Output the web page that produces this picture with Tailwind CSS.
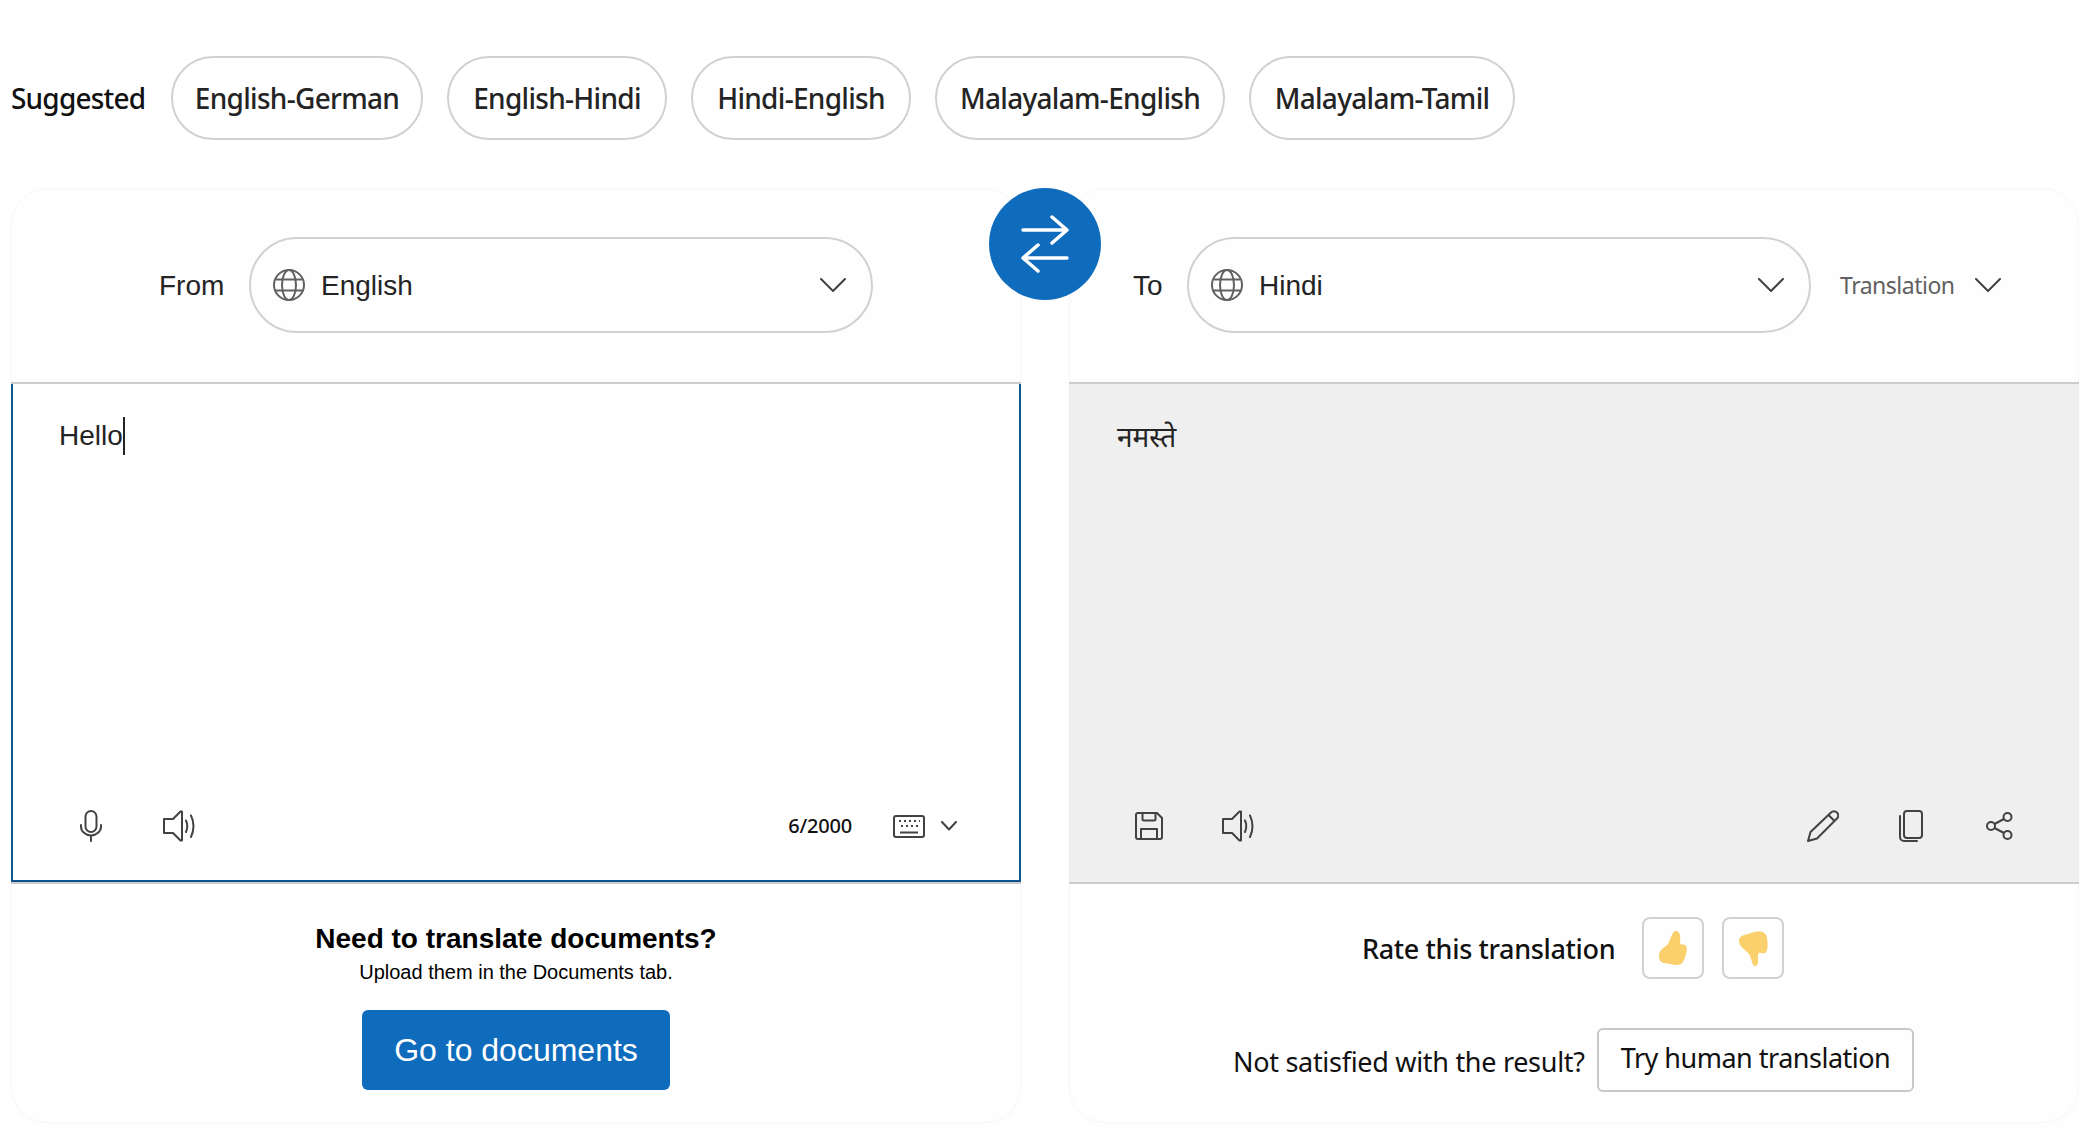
<!DOCTYPE html>
<html lang="en">
<head>
<meta charset="UTF-8" />
<meta name="viewport" content="width=device-width, initial-scale=1" />
<title>Translator</title>
<script src="https://cdn.jsdelivr.net/npm/@tailwindcss/browser@4"></script>
</head>
<body class="relative bg-white h-[1142px] overflow-hidden font-['Liberation_Sans',sans-serif] text-[#242424]">

  <!-- SUGGESTED -->
  <div class="flex items-center pt-[56px] pl-[11px] h-[188px] pb-[48px] font-['Noto_Sans',sans-serif]">
    <span class="w-[160px] text-[28px] font-medium text-[#111] tracking-[-0.8px]">Suggested</span>
    <div class="flex gap-6 text-[28px] font-medium tracking-[-0.7px]">
      <button class="w-[252px] h-[84px] rounded-[42px] border-2 border-[#d1d1d1]">English-German</button>
      <button class="w-[220px] h-[84px] rounded-[42px] border-2 border-[#d1d1d1]">English-Hindi</button>
      <button class="w-[220px] h-[84px] rounded-[42px] border-2 border-[#d1d1d1]">Hindi-English</button>
      <button class="w-[290px] h-[84px] rounded-[42px] border-2 border-[#d1d1d1]">Malayalam-English</button>
      <button class="w-[266px] h-[84px] rounded-[42px] border-2 border-[#d1d1d1]">Malayalam-Tamil</button>
    </div>
  </div>

  <!-- SWAP BUTTON -->
  <button class="absolute z-10 left-[989px] top-[188px] w-[112px] h-[112px] rounded-full bg-[#0f6cbd]">
    <svg width="112" height="112" viewBox="0 0 112 112" fill="none" stroke="#fff" stroke-width="3.5" stroke-linecap="round" stroke-linejoin="round"><path d="M34 42H78M63 29L78 42L63 55M34 70H78M49 57L34 70L49 83"/></svg>
  </button>

  <main class="grid grid-cols-[1010px_1010px] gap-x-[48px] pl-[11px]">

    <!-- SOURCE CARD -->
    <section class="h-[935px] rounded-[36px] bg-[#fefefe] border border-[#f7f7f7] shadow-[0_6px_8px_rgba(0,0,0,0.012)]">
      <div class="h-[193px] pb-px flex items-center pl-[147px] text-[28px]">
        <span class="w-[90px] pt-px">From</span>
        <div class="w-[624px] h-[96px] rounded-[48px] border-2 border-[#d1d1d1] flex items-center pl-[22px] pr-[25px]">
          <svg width="32" height="32" viewBox="0 0 32 32" fill="none" stroke="#616161" stroke-width="2"><circle cx="16" cy="16" r="15"/><ellipse cx="16" cy="16" rx="7" ry="15"/><path d="M2.500 10.500H29.500M2.500 21.500H29.500"/></svg>
          <span class="ml-4 pt-px">English</span>
          <svg class="ml-auto" width="26" height="14" viewBox="0 0 26 14" fill="none" stroke="#424242" stroke-width="2" stroke-linecap="round" stroke-linejoin="round"><path d="M1 1L13 13L25 1"/></svg>
        </div>
      </div>

      <div class="border-y-2 border-[#cccccc] -mx-px">
        <div class="h-[498px] border-2 border-t-0 border-[#0f548c] bg-white flex flex-col justify-between">
          <div class="pt-[32px] pl-[46px] text-[28px] leading-[40px] flex items-center">Hello<span class="w-[2px] h-[38px] bg-[#242424]"></span></div>
          <div class="flex items-center h-[48px] mb-[30px] pl-[67px] pr-[62px]">
            <svg width="22" height="32" viewBox="0 0 22 32" fill="none" stroke="#424242" stroke-width="2" stroke-linecap="round"><rect x="5.500" y="1" width="11" height="21" rx="5.500"/><path d="M1 15V16.500A10 9 0 0 0 21 16.500V15M11 25.500V31"/></svg>
            <svg class="ml-[61px]" width="32" height="32" viewBox="0 0 32 32" fill="none" stroke="#424242" stroke-width="2" stroke-linejoin="round" stroke-linecap="round"><path d="M1 9H10L17.500 1.500H19V30.500H17.500L10 23H1Z"/><path d="M23 10.500Q25.500 16 23 22M28 5.500Q33 16 28 27"/></svg>
            <span class="ml-auto text-[20px] font-medium font-['Noto_Sans',sans-serif] tracking-[-0.2px] text-[#111]">6/2000</span>
            <svg class="ml-[41px]" width="32" height="23" viewBox="0 0 32 23" fill="none" stroke="#424242" stroke-width="2"><rect x="1" y="1" width="30" height="21" rx="2"/><path d="M7 17.500H25" /><path stroke-width="2" stroke-dasharray="2 3" d="M6 6H27M8 11H25"/></svg>
            <svg class="ml-[16px]" width="16" height="10" viewBox="0 0 16 10" fill="none" stroke="#424242" stroke-width="2" stroke-linecap="round" stroke-linejoin="round"><path d="M1 1L8 8.500L15 1"/></svg>
          </div>
        </div>
      </div>

      <div class="flex flex-col items-center pt-[39px]">
        <h3 class="text-[28px] leading-[32px] font-bold text-black">Need to translate documents?</h3>
        <p class="mt-[5px] text-[20px] leading-[24px] text-black">Upload them in the Documents tab.</p>
        <button class="mt-[26px] w-[308px] h-[80px] rounded-[6px] bg-[#0f6cbd] text-white text-[32px]">Go to documents</button>
      </div>
    </section>

    <!-- TARGET CARD -->
    <section class="h-[935px] rounded-[36px] bg-[#fefefe] border border-[#f7f7f7] shadow-[0_6px_8px_rgba(0,0,0,0.012)]">
      <div class="h-[193px] pb-px flex items-center pl-[63px] text-[28px]">
        <span class="w-[54px] pt-px">To</span>
        <div class="w-[624px] h-[96px] rounded-[48px] border-2 border-[#d1d1d1] flex items-center pl-[22px] pr-[25px]">
          <svg width="32" height="32" viewBox="0 0 32 32" fill="none" stroke="#616161" stroke-width="2"><circle cx="16" cy="16" r="15"/><ellipse cx="16" cy="16" rx="7" ry="15"/><path d="M2.500 10.500H29.500M2.500 21.500H29.500"/></svg>
          <span class="ml-4 pt-px">Hindi</span>
          <svg class="ml-auto" width="26" height="14" viewBox="0 0 26 14" fill="none" stroke="#424242" stroke-width="2" stroke-linecap="round" stroke-linejoin="round"><path d="M1 1L13 13L25 1"/></svg>
        </div>
        <span class="ml-[29px] pt-px text-[23px] text-[#616161] font-['Noto_Sans',sans-serif] tracking-[-0.5px]">Translation</span>
        <svg class="ml-[20px]" width="26" height="14" viewBox="0 0 26 14" fill="none" stroke="#424242" stroke-width="2" stroke-linecap="round" stroke-linejoin="round"><path d="M1 1L13 13L25 1"/></svg>
      </div>

      <div class="border-y-2 border-[#cccccc] -mx-px">
        <div class="h-[498px] bg-[#efefef] flex flex-col justify-between">
          <div lang="hi" class="pt-[32px] pl-[48px] text-[28px] leading-[40px] font-['Noto_Sans','DejaVu_Sans',sans-serif]">नमस्ते</div>
          <div class="flex items-center h-[48px] mb-[32px] pl-[66px] pr-[66px]">
            <svg width="28" height="28" viewBox="0 0 28 28" fill="none" stroke="#424242" stroke-width="2" stroke-linejoin="round"><path d="M3 1H22L27 6V25A2 2 0 0 1 25 27H3A2 2 0 0 1 1 25V3A2 2 0 0 1 3 1Z"/><path d="M6 27V17H22V27M7.500 1V7A1.500 1.500 0 0 0 9 8.500H19A1.500 1.500 0 0 0 20.500 7V1"/></svg>
            <svg class="ml-[59px]" width="32" height="32" viewBox="0 0 32 32" fill="none" stroke="#424242" stroke-width="2" stroke-linejoin="round" stroke-linecap="round"><path d="M1 9H10L17.500 1.500H19V30.500H17.500L10 23H1Z"/><path d="M23 10.500Q25.500 16 23 22M28 5.500Q33 16 28 27"/></svg>
            <svg class="ml-auto" width="32" height="32" viewBox="0 0 32 32" fill="none" stroke="#424242" stroke-width="2" stroke-linejoin="round" stroke-linecap="round"><path d="M1 31L3.500 22L24 2.500A4.200 4.200 0 0 1 30 8.500L10 28.500Z M21.500 5L27.500 11"/></svg>
            <svg class="ml-[60px]" width="24" height="32" viewBox="0 0 24 32" fill="none" stroke="#424242" stroke-width="2" stroke-linecap="round"><rect x="5" y="1" width="18" height="27" rx="3"/><path d="M1 6V27A4 4 0 0 0 5 31H18"/></svg>
            <svg class="ml-[63px]" width="27" height="28" viewBox="0 0 27 28" fill="none" stroke="#424242" stroke-width="2"><circle cx="21.500" cy="5" r="4"/><circle cx="5" cy="14" r="4"/><circle cx="21.500" cy="23" r="4"/><path d="M8.500 12L18 7M8.500 16L18 21"/></svg>
          </div>
        </div>
      </div>

      <div class="pt-[33px]">
        <div class="flex items-center pl-[292px] h-[62px]">
          <span class="w-[280px] pt-[3px] text-[27px] font-medium font-['Noto_Sans',sans-serif] tracking-[-0.35px] text-[#111]">Rate this translation</span>
          <button class="w-[62px] h-[62px] rounded-[8px] border-2 border-[#d1d1d1]">
            <svg width="58" height="58" viewBox="2 2 58 58" fill="#f9d06b"><path d="M34 14C30 14 29 22 26 27C23 31 17 31 17 40C17 46 22 46 28 47C34 48 39 50 42 43C44 38 46 32 44 29C42 26 38 29 38 26C39 20 38 14 34 14Z"/></svg>
          </button>
          <button class="ml-[18px] w-[62px] h-[62px] rounded-[8px] border-2 border-[#d1d1d1]">
            <svg width="58" height="58" viewBox="2 2 58 58" fill="#f9d06b"><path d="M17 24C17 18 24 18 29 16C35 14 44 13 45 21C46 27 46 35 43 36C40 37 37 34 36 38C36 42 37 49 33 49C30 49 30 42 27 37C24 33 17 30 17 24Z"/></svg>
          </button>
        </div>
        <div class="flex items-center pl-[163px] mt-[49px] h-[64px] text-[#111] font-['Noto_Sans',sans-serif]">
          <span class="w-[364px] pt-[5px] text-[27px] tracking-[-0.3px]">Not satisfied with the result?</span>
          <button class="w-[317px] h-[64px] rounded-[6px] border-2 border-[#c8c8c8] pb-[4px] text-[27px] tracking-[-0.5px]">Try human translation</button>
        </div>
      </div>
    </section>
  </main>

</body>
</html>
